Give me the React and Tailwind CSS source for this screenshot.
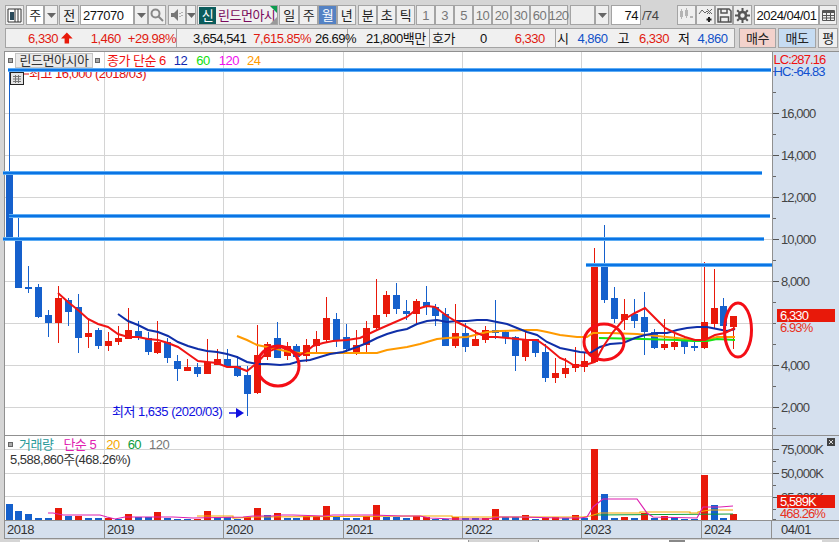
import React from "react";

const RED = "#e8190a";
const BLUE = "#1560cc";

// candles in screen pixels: [color, wickTop, bodyTop, bodyBottom, wickBottom]
const candles = [
  ["b",70,174,240,240],["b",217,237,288,288],["b",266,287,289,293],["b",284,287,317,318],["b",310,315,323,337],
  ["r",286,298,323,343],["b",298,300,312,326],["b",294,307,338,353],["r",320,333,337,348],["b",328,330,346,349],
  ["r",332,341,346,351],["r",326,338,342,345],["r",308,330,339,339],["b",321,331,337,340],["b",332,338,352,355],
  ["r",321,342,353,354],["b",338,342,358,363],["b",355,361,369,381],["r",359,367,371,371],["b",363,367,374,377],
  ["r",339,362,374,374],["r",349,359,365,365],["b",349,359,366,366],["b",356,366,376,377],["b",366,375,394,416],
  ["r",325,355,393,394],["r",342,344,357,360],["b",322,338,358,358],["r",342,346,356,360],["b",344,346,357,359],
  ["r",339,345,356,362],["r",331,339,346,353],["r",297,318,340,343],["b",313,319,340,347],["b",324,337,349,352],
  ["r",330,345,352,355],["r",321,328,345,352],["r",279,315,328,329],["r",291,295,314,317],["b",283,295,309,314],
  ["b",300,311,314,320],["r",299,301,314,325],["b",286,302,307,315],["b",304,307,316,326],["b",308,314,346,346],
  ["r",304,333,346,348],["b",323,333,347,352],["r",330,339,346,346],["r",326,330,340,343],["b",300,330,333,339],
  ["b",330,332,338,344],["b",336,337,356,371],["r",330,339,357,361],["b",339,339,353,357],["b",344,352,378,382],
  ["r",358,373,378,383],["r",358,368,374,378],["r",347,364,368,372],["r",352,361,367,372],["r",248,266,362,362],
  ["b",225,266,300,303],["b",287,298,319,323],["r",299,314,320,330],["b",299,314,321,328],["b",292,317,332,355],
  ["b",329,332,348,349],["r",319,344,348,350],["r",334,342,347,350],["b",337,341,347,354],["b",342,346,348,351],
  ["r",262,322,348,349],["r",269,308,324,329],["b",298,306,326,331],["r",316,316,327,349],
];

const ma6 = "58,293 68,302 78,310 88,319 98,324 108,327 118,334 128,337 138,337 148,339 158,340 168,343 178,347 188,354 198,361 207,362 217,363 227,367 237,367 247,371 257,363 267,352 280,347 290,350 300,355 307,351 313,346 323,343 333,341 347,340 360,338 377,330 393,323 407,317 417,309 427,306 435,307 447,316 457,322 467,327 477,333 487,337 497,337 507,338 517,339 527,340 537,340 547,347 560,358 565,360 575,366 585,365 595,362 603,347 613,332 623,320 635,313 645,308 657,320 665,328 675,333 685,337 695,340 705,340 715,335 725,333 735,328";
const ma12 = "118,314 128,321 138,325 148,330 158,332 168,336 178,342 188,346 198,349 207,351 217,352 227,354 237,357 247,362 257,364 267,364 280,365 290,364 300,361 310,360 320,357 330,354 343,352 357,347 367,343 377,338 387,334 397,331 407,329 417,324 427,321 437,320 447,322 457,321 467,321 477,320 487,320 497,322 507,324 517,328 527,332 537,335 547,342 560,348 570,350 580,352 590,353 600,347 610,344 623,343 635,338 645,335 657,333 667,333 677,330 687,328 697,327 707,327 717,329 727,331 735,329";
const ma24 = "237,336 247,340 257,345 267,347 290,352 300,353 347,353 377,353 387,350 407,347 420,344 437,339 447,338 467,337 487,332 500,331 527,330 537,330 547,332 560,335 577,337 587,337 593,333 610,333 637,334 657,336 677,338 693,340 707,340 717,337 735,337";
const ma60 = "599,338 643,339 677,340 693,341 707,341 717,339 735,340";

const volumes = [
  ["b",504],["b",511],["b",514],["b",518],["b",518],["r",508],["b",516],["r",516],["b",518],["b",518],
  ["r",518],["b",519],["r",514],["b",517],["b",517],["r",512],["b",518],["b",519],["b",519],["r",519],
  ["r",511],["b",517],["b",517],["b",519],["r",517],["r",508],["b",515],["r",513],["b",518],["b",518],
  ["r",516],["r",516],["r",506],["b",516],["b",518],["b",518],["r",516],["r",505],["b",517],["b",517],
  ["b",518],["r",516],["r",517],["b",519],["b",519],["r",517],["b",518],["b",518],["r",518],["r",509],
  ["b",517],["b",517],["r",515],["b",519],["r",518],["r",517],["b",518],["r",515],["b",518],["r",449],
  ["b",494],["b",518],["r",517],["b",518],["r",513],["b",518],["r",516],["b",517],["b",519],["b",519],
  ["r",475],["b",505],["b",518],["r",514],
];

const volMa5 = "48,513 53,513 63,515 100,515 107,517 115,519 125,517 153,517 173,517 193,518 243,517 253,516 272,516 282,515 293,515 323,516 333,515 372,515 402,516 420,516 430,518 453,519 487,519 500,517 520,517 560,518 580,518 587,517 593,507 603,499 637,499 647,513 653,517 697,518 703,507 710,507 720,507 733,506";
const volMa20 = "197,516 233,516 233,518 253,517 420,516 452,516 452,517 540,517 550,517 583,517 590,516 600,513 640,513 640,512 690,512 690,513 698,513 698,512 710,510 733,510";
const volMa60 = "594,515 733,514";

const gridX = [104.5, 223.5, 343.5, 462.5, 581.5, 701.5];
const candleX = (i) => Math.round(8.5 + i * 9.93);

const Btn = ({ className = "", bg = "bg-[#efefef]", children }) => (
  <div className={`flex items-center justify-center h-[20px] border border-[#a4a4a4] text-[#222] shrink-0 ${bg} ${className}`}>
    {children}
  </div>
);

const Arrow = ({ className = "" }) => (
  <Btn className={className}>
    <svg width="9" height="5"><path d="M0 0h9L4.5 5z" fill="#666" /></svg>
  </Btn>
);

const PriceChart = () => (
  <svg className="block w-[767px] h-[383px] overflow-visible bg-white" viewBox="5 52 767 383">
    {[113.5, 155.5, 197.5, 239.5, 281.5, 323.5, 365.5, 407.5].map((y) => (
      <line key={y} x1="5" x2="772" y1={y} y2={y} stroke="#d4d4d4" />
    ))}
    {gridX.map((x) => (
      <line key={x} x1={x} x2={x} y1="52" y2="435" stroke="#d4d4d4" />
    ))}
    <path d="M24 74h5" stroke="#e01010" />
    <text x="29" y="78" fontSize="13" fill="#e01010">최고 16,000 (2018/03)</text>
    <rect x="10.5" y="72.5" width="13" height="12" fill="#e4e4e4" stroke="#222" />
    <path d="M13 76.5h8M13 79h8M13 81.5h8M15.5 75v8M18.5 75v8" stroke="#777" fill="none" />
    {candles.map(([c, wt, bt, bb, wb], i) => {
      const x = candleX(i);
      const fill = c === "r" ? RED : BLUE;
      return (
        <g key={i} shapeRendering="crispEdges">
          <rect x={x} y={wt} width="1" height={wb - wt} fill={fill} />
          <rect x={x - 3} y={bt} width="7" height={Math.max(bb - bt, 2)} fill={fill} />
        </g>
      );
    })}
    <polyline points={ma24} fill="none" stroke="#ff9a00" strokeWidth="2" />
    <polyline points={ma60} fill="none" stroke="#16e316" strokeWidth="2" />
    <polyline points={ma12} fill="none" stroke="#0f2fa8" strokeWidth="2" />
    <polyline points={ma6} fill="none" stroke="#f01414" strokeWidth="2" />
    {[[8, 771, 70], [3, 762, 173], [9, 770, 216], [3, 764, 239], [586, 772, 265]].map(([a, b, y]) => (
      <g key={y}>
        <line x1={a} x2={b} y1={y} y2={y} stroke="#7cc0fa" strokeWidth="4" />
        <line x1={a} x2={b} y1={y} y2={y} stroke="#0a74e4" strokeWidth="2.6" />
      </g>
    ))}
    <ellipse cx="278" cy="366" rx="21" ry="20" fill="none" stroke="#f40e16" strokeWidth="3" />
    <ellipse cx="604" cy="342" rx="20" ry="18" fill="none" stroke="#f40e16" strokeWidth="3" />
    <ellipse cx="738" cy="330" rx="13.5" ry="27" fill="none" stroke="#f40e16" strokeWidth="3" />
    <text x="112" y="416" fontSize="13" fill="#1010e0">최저 1,635 (2020/03)</text>
    <path d="M229 413h8" stroke="#1010e0" strokeWidth="1.5" />
    <path d="M236 408l8 5-8 5z" fill="#1010e0" />
  </svg>
);

const VolumeChart = () => (
  <svg className="block w-[767px] h-[84px] bg-white" viewBox="5 436 767 84">
    {[449.5, 473.5, 496.5].map((y) => (
      <line key={y} x1="5" x2="772" y1={y} y2={y} stroke="#d4d4d4" />
    ))}
    {gridX.map((x) => (
      <line key={x} x1={x} x2={x} y1="436" y2="520" stroke="#d4d4d4" />
    ))}
    {volumes.map(([c, top], i) => (
      <rect key={i} x={candleX(i) - 3} y={top} width="7" height={520 - top} fill={c === "r" ? RED : BLUE} shapeRendering="crispEdges" />
    ))}
    <polyline points={volMa60} fill="none" stroke="#0d9c3c" strokeWidth="1.2" />
    <polyline points={volMa20} fill="none" stroke="#f5a800" strokeWidth="1.2" />
    <polyline points={volMa5} fill="none" stroke="#dd20b0" strokeWidth="1.2" />
  </svg>
);

const PriceAxis = () => {
  const labels = [[113, "16,000"], [155, "14,000"], [197, "12,000"], [239, "10,000"], [281, "8,000"], [365, "4,000"], [407, "2,000"]];
  const minor = [];
  for (let y = 71; y < 430; y += 21) minor.push(y);
  return (
    <svg className="block w-[66px] h-[383px]" viewBox="773 52 66 383" letterSpacing="-0.9">
      {minor.map((y) => (
        <line key={y} x1="773" x2="776" y1={y + 0.5} y2={y + 0.5} stroke="#666" />
      ))}
      {labels.map(([y, t]) => (
        <g key={y}>
          <line x1="773" x2="779" y1={y + 0.5} y2={y + 0.5} stroke="#555" />
          <text x="781" y={y + 5} fontSize="13" fill="#444">{t}</text>
        </g>
      ))}
      <text x="773.5" y="64" fontSize="13" fill="#f01010">LC:287.16</text>
      <text x="773.5" y="76" fontSize="13" fill="#1050d0">HC:-64.83</text>
      <rect x="777" y="309" width="58" height="13" fill={RED} />
      <text x="780" y="320" fontSize="13" fill="#fff">6,330</text>
      <text x="780" y="332" fontSize="13" fill="#e83020">6.93%</text>
    </svg>
  );
};

const VolumeAxis = () => (
  <svg className="block w-[66px] h-[84px]" viewBox="773 436 66 84" letterSpacing="-0.9">
    {[[449, "75,000K"], [473, "50,000K"], [497, "25,000K"]].map(([y, t]) => (
      <g key={y}>
        <line x1="773" x2="779" y1={y + 0.5} y2={y + 0.5} stroke="#555" />
        <text x="781" y={y + 5} fontSize="13" fill="#444">{t}</text>
      </g>
    ))}
    {[461, 485, 509, 519].map((y) => (
      <line key={y} x1="773" x2="776" y1={y + 0.5} y2={y + 0.5} stroke="#666" />
    ))}
    <rect x="777" y="495" width="58" height="13" fill={RED} />
    <text x="780" y="506" fontSize="13" fill="#fff">5,589K</text>
    <text x="780" y="518" fontSize="13" fill="#e83020">468.26%</text>
    <rect x="827" y="438" width="8" height="8" fill="#444" />
    <path d="M829 440l4 4M833 440l-4 4" stroke="#ddd" />
  </svg>
);

export default function App() {
  return (
    <div className="w-[839px] h-[542px] overflow-hidden bg-[#d5d5d5] text-[13px] tracking-[-0.5px] leading-none text-[#111] font-['Liberation_Sans','Noto_Sans_CJK_KR',sans-serif]">
      <div className="h-[5px]" />
      {/* toolbar */}
      <div className="flex items-center h-[20px] pl-[5px]">
        <Btn className="w-[19px]">
          <svg width="15" height="15" viewBox="0 0 15 15">
            <path d="M1 1h13v13H1z" fill="#fff" stroke="#333" />
            <path d="M3 4h4v8H3z" fill="#2a4a5a" />
            <path d="M8 1v13M11 1v13" stroke="#333" />
          </svg>
        </Btn>
        <Btn className="w-[18px] ml-[2px]" bg="bg-white">주</Btn>
        <Arrow className="w-[14px]" />
        <Btn className="w-[20px] ml-[1px]">전</Btn>
        <div className="flex items-center w-[54px] h-[20px] ml-[1px] pl-[2px] bg-white border border-[#a4a4a4]">277070</div>
        <Arrow className="w-[14px]" />
        <Btn className="w-[18px]">
          <svg width="14" height="14" viewBox="0 0 14 14" fill="none" stroke="#888" strokeWidth="2">
            <circle cx="5.5" cy="5.5" r="4" />
            <path d="M8.5 8.5L13 13" />
          </svg>
        </Btn>
        <Btn className="w-[18px] ml-[2px]">
          <svg width="13" height="12" viewBox="0 0 13 12">
            <path d="M0 4h3l4-4v12L3 8H0z" fill="#777" />
            <path d="M9 4v1M9 7v1M11 3v1M11 6v1" stroke="#777" />
          </svg>
        </Btn>
        <Arrow className="w-[10px]" />
        <div className="relative flex items-center w-[81px] h-[20px] ml-[1px] bg-[#f0f0f0] border border-[#a4a4a4]">
          <div className="flex items-center justify-center w-[17px] h-[17px] ml-[1px] bg-[#0b5c5c] text-white">신</div>
          <span className="ml-[2px] text-[#7a0b5c] whitespace-nowrap overflow-hidden">린드먼아시</span>
          <div className="absolute right-0 top-0 w-0 h-0 border-t-[7px] border-l-[7px] border-t-[#0e9c50] border-l-transparent" />
          <div className="absolute right-0 bottom-0 w-0 h-0 border-b-[7px] border-l-[7px] border-b-[#999] border-l-transparent" />
        </div>
        <Btn className="w-[20px] ml-[1px]">일</Btn>
        <Btn className="w-[19px]">주</Btn>
        <Btn className="w-[19px]" bg="bg-[#5482c4]"><span className="text-white">월</span></Btn>
        <Btn className="w-[19px]">년</Btn>
        <Btn className="w-[19px] ml-[2px]">분</Btn>
        <Btn className="w-[19px]">초</Btn>
        <Btn className="w-[19px]">틱</Btn>
        <div className="flex ml-[1px]">
          {["1", "3", "5", "10", "20", "30", "60", "120"].map((t) => (
            <Btn key={t} className="w-[19px]"><span className="text-[#777]">{t}</span></Btn>
          ))}
        </div>
        <Btn className="w-[25px] ml-[2px]" />
        <Arrow className="w-[14px]" />
        <div className="flex items-center justify-end w-[30px] h-[20px] ml-[2px] pr-[2px] bg-white border border-[#a4a4a4]">74</div>
        <span className="w-[20px] ml-[1px] text-[#444]">/74</span>
        <Btn className="w-[19px] ml-[15px]">
          <svg width="15" height="14" viewBox="0 0 15 14" fill="#b4b4b4">
            <path d="M1 3h3v6H1zM6 2h3v6H6zM11 8h3v2h-3zM2 1h1v10H2zM7 0h1v10H7z" />
          </svg>
        </Btn>
        <Btn className="w-[19px]">
          <svg width="16" height="15" viewBox="0 0 16 15" fill="none" stroke="#666">
            <path d="M1 6l3-4 3 3 2-2 3 3M9 1l5 5M14 1L9 6" />
            <path d="M11 9v5M8.5 11.5h5" stroke="#222" strokeWidth="2" />
          </svg>
        </Btn>
        <Btn className="w-[18px]">
          <svg width="15" height="15" viewBox="0 0 15 15" fill="none" stroke="#555" strokeWidth="1.5">
            <path d="M1 1h11l2 2v11H1z" />
            <path d="M4 1v4h6V1M3.5 14V9h8v5" />
          </svg>
        </Btn>
        <Btn className="w-[19px]">
          <svg width="15" height="15" viewBox="0 0 15 15" fill="none" stroke="#555">
            <circle cx="7.5" cy="7.5" r="3.5" strokeWidth="2.6" />
            <path d="M7.5 0v3M7.5 12v3M0 7.5h3M12 7.5h3M2.2 2.2l2 2M10.8 10.8l2 2M12.8 2.2l-2 2M4.2 10.8l-2 2" strokeWidth="2" />
          </svg>
        </Btn>
        <div className="flex items-center justify-center w-[65px] h-[20px] ml-[2px] bg-white border border-[#a4a4a4]">2024/04/01</div>
        <Btn className="w-[18px]">
          <svg width="13" height="12" viewBox="0 0 13 12" fill="none" stroke="#555">
            <path d="M.5 1.5h12v10H.5z" />
            <path d="M.5 3h12" strokeWidth="2" />
            <path d="M.5 6.5h12M.5 9h12M4.5 4v7M8.5 4v7" />
          </svg>
        </Btn>
      </div>

      {/* quote strip */}
      <div className="flex items-center h-[20px] mt-[3px] pl-[5px]">
        <div className="flex items-center w-[730px] h-[20px] bg-[#f0f0f0] border border-[#a4a4a4] whitespace-nowrap">
          <div className="flex items-center w-[171px] h-full border-r border-[#a4a4a4] text-[#e01a10]">
            <span className="w-[58px] text-right">6,330</span>
            <svg className="ml-[3px]" width="13" height="12" viewBox="0 0 13 12"><path d="M6.5 0L13 6.5H9V12H4V6.5H0z" fill="#e8190a" /></svg>
            <span className="ml-[18px]">1,460</span>
            <span className="ml-[7px]">+29.98%</span>
          </div>
          <div className="flex items-center w-[171px] h-full border-r border-[#a4a4a4]">
            <span className="ml-[16px]">3,654,541</span>
            <span className="ml-[7px] text-[#e01a10]">7,615.85%</span>
            <span className="ml-[4px]">26.69%</span>
          </div>
          <div className="flex items-center w-[82px] h-full border-r border-[#a4a4a4]">
            <span className="ml-[18px]">21,800백만</span>
          </div>
          <div className="flex items-center w-[126px] h-full border-r border-[#a4a4a4]">
            <span className="ml-[2px]">호가</span>
            <span className="ml-[25px]">0</span>
            <span className="ml-[28px] text-[#e01a10]">6,330</span>
          </div>
          <div className="flex items-center flex-1 h-full">
            <span className="ml-[1px]">시</span>
            <span className="ml-[9px] text-[#1050c8]">4,860</span>
            <span className="ml-[10px]">고</span>
            <span className="ml-[10px] text-[#e01a10]">6,330</span>
            <span className="ml-[9px]">저</span>
            <span className="ml-[8px] text-[#1050c8]">4,860</span>
          </div>
        </div>
        <Btn className="w-[37px] ml-[4px] border-[#999]" bg="bg-[#f3d2cc]">매수</Btn>
        <Btn className="w-[38px] ml-[2px] border-[#999]" bg="bg-[#c6dcf2]">매도</Btn>
        <Btn className="w-[20px] ml-[2px] border-[#999]">평</Btn>
      </div>

      {/* chart panes */}
      <div className="mt-[3px] ml-[4px] border-l border-t border-[#909090]">
        <div className="relative flex h-[383px]">
          <PriceChart />
          <div className="w-[1px] bg-[#909090]" />
          <div className="bg-[#d5e0ee]"><PriceAxis /></div>
          <div className="absolute left-[3px] top-[1px] flex items-center h-[15px] whitespace-nowrap">
            <div className="w-[5px] h-[5px] bg-[#aaa] border border-[#666]" />
            <div className="flex items-center justify-center h-[15px] ml-[2px] w-[78px] bg-[#eaeaea] border border-[#c4c4c4] text-[#333]">린드먼아시아</div>
            <div className="w-[5px] h-[5px] ml-[2px] bg-[#aaa] border border-[#666]" />
            <span className="ml-[7px] text-[#f01010]">종가 단순 6</span>
            <span className="ml-[8px] text-[#1028b0]">12</span>
            <span className="ml-[9px] text-[#10e010]">60</span>
            <span className="ml-[9px] text-[#f010f0]">120</span>
            <span className="ml-[8px] text-[#ff9a00]">24</span>
          </div>
        </div>
        <div className="h-[1px] bg-[#909090]" />
        <div className="relative flex h-[84px]">
          <VolumeChart />
          <div className="w-[1px] bg-[#909090]" />
          <div className="bg-[#d5e0ee]"><VolumeAxis /></div>
          <div className="absolute left-[3px] top-[2px] whitespace-nowrap">
            <div className="flex items-center h-[13px]">
              <div className="w-[5px] h-[5px] bg-[#aaa] border border-[#666]" />
              <span className="ml-[6px] text-[#2a9a9a]">거래량</span>
              <span className="ml-[10px] text-[#e020b0]">단순 5</span>
              <span className="ml-[10px] text-[#f5a800]">20</span>
              <span className="ml-[8px] text-[#0d9c3c]">60</span>
              <span className="ml-[8px] text-[#777]">120</span>
            </div>
            <div className="mt-[2px] ml-[2px] text-[#333]">5,588,860주(468.26%)</div>
          </div>
        </div>
        {/* date axis */}
        <div className="flex h-[19px] bg-[#d5e0ee] border-t border-b border-[#909090] text-[#333]">
          {[["2018", "w-[100px]"], ["2019", "w-[119px]"], ["2020", "w-[120px]"], ["2021", "w-[119px]"], ["2022", "w-[119px]"], ["2023", "w-[120px]"], ["2024", "w-[70px]"]].map(([t, w]) => (
            <div key={t} className={`flex items-center pl-[2px] h-full border-r border-[#909090] ${w}`}>{t}</div>
          ))}
          <div className="flex items-center pl-[9px] flex-1 h-full">04/01</div>
        </div>
      </div>

      {/* scrollbar strip, only its top edge is on screen */}
      <div className="flex h-[2px] mt-[1px] ml-[20px]">
        <div className="w-[448px] bg-white" />
        <div className="w-[71px] bg-[#d5d5d5] border-x border-[#999]" />
        <div className="w-[130px] bg-white" />
        <div className="w-[16px] bg-[#888]" />
        <div className="w-[137px] bg-white" />
      </div>
    </div>
  );
}
